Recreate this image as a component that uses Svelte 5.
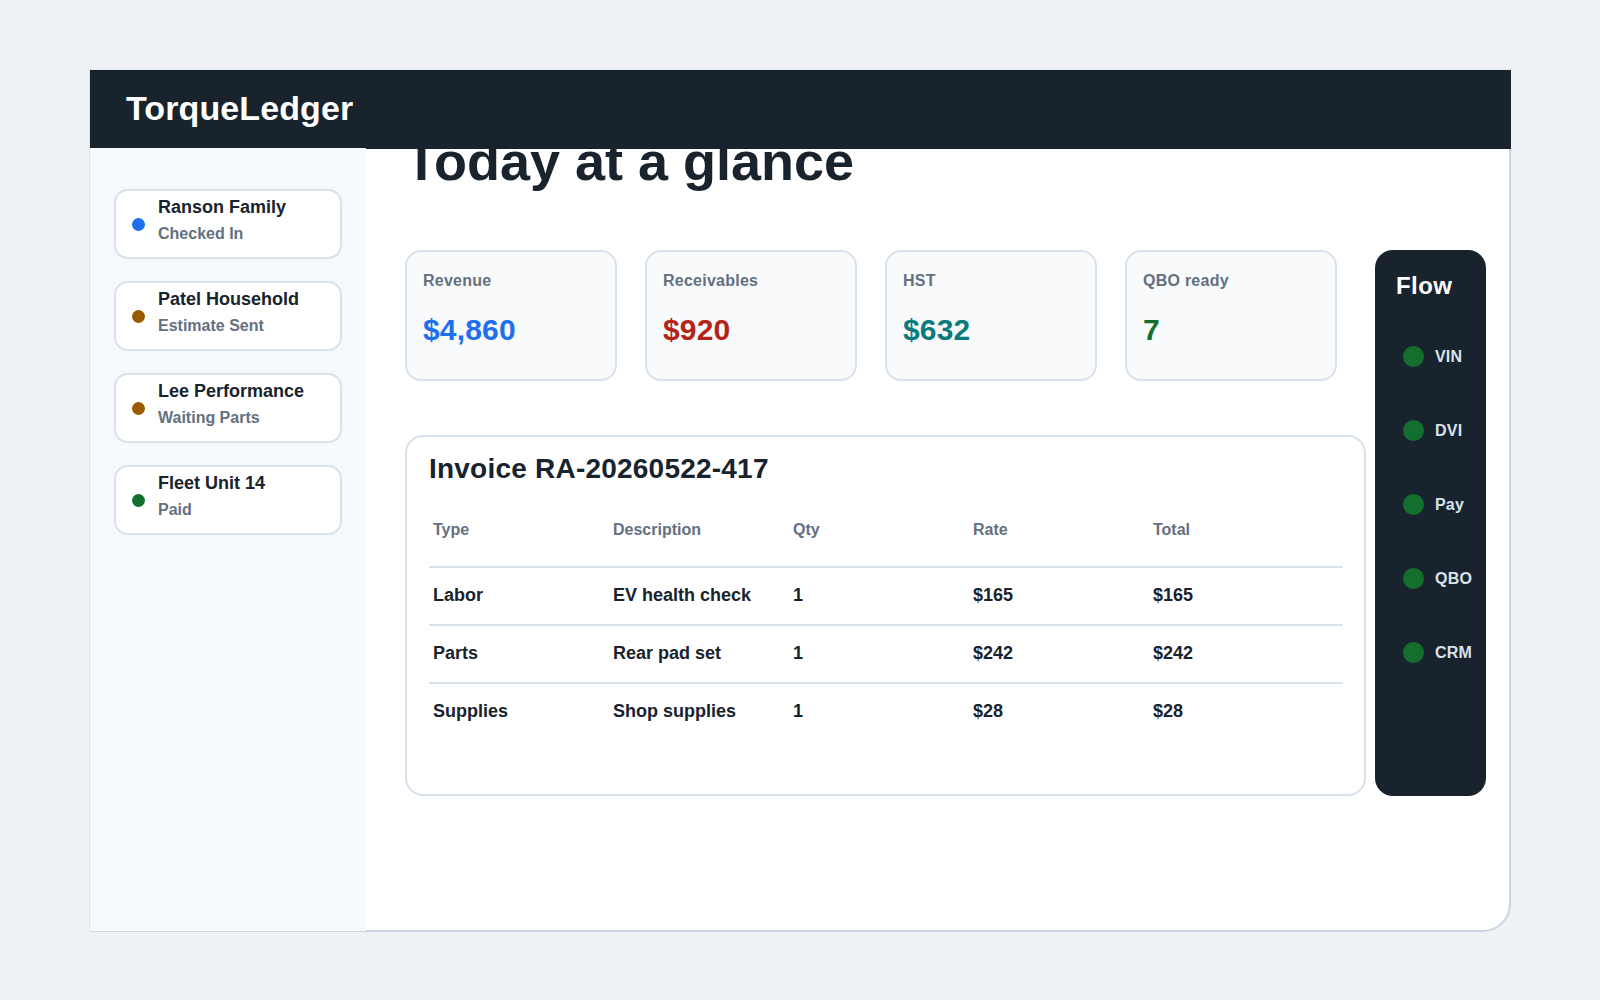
<script lang="ts">
	const jobs = [
		{ name: 'Ranson Family', status: 'Checked In', tone: 'blue' },
		{ name: 'Patel Household', status: 'Estimate Sent', tone: 'amber' },
		{ name: 'Lee Performance', status: 'Waiting Parts', tone: 'amber' },
		{ name: 'Fleet Unit 14', status: 'Paid', tone: 'green' }
	];

	const stats = [
		{ label: 'Revenue', value: '$4,860', tone: 'blue' },
		{ label: 'Receivables', value: '$920', tone: 'red' },
		{ label: 'HST', value: '$632', tone: 'teal' },
		{ label: 'QBO ready', value: '7', tone: 'green' }
	];

	const columns = ['Type', 'Description', 'Qty', 'Rate', 'Total'];

	const lines = [
		['Labor', 'EV health check', '1', '$165', '$165'],
		['Parts', 'Rear pad set', '1', '$242', '$242'],
		['Supplies', 'Shop supplies', '1', '$28', '$28']
	];

	const steps = ['VIN', 'DVI', 'Pay', 'QBO', 'CRM'];
</script>

<div class="frame">
	<header class="topbar">
		<span class="logo">TorqueLedger</span>
	</header>

	<aside class="sidebar">
		{#each jobs as job (job.name)}
			<div class="job">
				<span class="dot {job.tone}"></span>
				<div class="job-text">
					<div class="job-name">{job.name}</div>
					<div class="job-status">{job.status}</div>
				</div>
			</div>
		{/each}
	</aside>

	<main class="main">
		<h1 class="title">Today at a glance</h1>

		<div class="board">
			<section class="stats">
				{#each stats as stat (stat.label)}
					<div class="stat">
						<div class="stat-label">{stat.label}</div>
						<div class="stat-value {stat.tone}">{stat.value}</div>
					</div>
				{/each}
			</section>

			<section class="invoice">
				<h2 class="invoice-title">Invoice RA-20260522-417</h2>
				<div class="row head">
					{#each columns as col (col)}
						<div class="cell">{col}</div>
					{/each}
				</div>
				{#each lines as line (line[0])}
					<div class="row">
						{#each line as value, i (i)}
							<div class="cell">{value}</div>
						{/each}
					</div>
				{/each}
			</section>

			<aside class="flow">
				<h3 class="flow-title">Flow</h3>
				{#each steps as step (step)}
					<div class="step">
						<span class="step-dot"></span>
						<span class="step-label">{step}</span>
					</div>
				{/each}
			</aside>
		</div>
	</main>
</div>

<style>
	:global(body) {
		background: #eef2f5;
		font-family: 'Liberation Sans', Arial, sans-serif;
		color: #18232d;
	}

	.frame {
		box-sizing: border-box;
		width: 1422px;
		height: 863px;
		margin: 69px 0 0 89px;
		display: grid;
		grid-template-columns: 275px 1fr;
		grid-template-rows: 78px 1fr;
		background: #fff;
		border: 2px solid #cbd5e1;
		border-top-color: #e4e9ef;
		border-left-color: #dfe5eb;
		border-radius: 0 0 28px 0;
	}

	.topbar {
		grid-column: 1 / -1;
		position: relative;
		z-index: 1;
		margin: -1px -2px 0 -1px;
		display: flex;
		align-items: center;
		padding: 0 36px 2px;
		background: #18232d;
	}

	.logo {
		font-size: 34px;
		font-weight: 700;
		letter-spacing: 0.1px;
		color: #fff;
	}

	.sidebar {
		position: relative;
		z-index: 2;
		margin: -1px 0 -1px -1px;
		padding: 41px 24px 0;
		display: flex;
		flex-direction: column;
		gap: 22px;
		background: #f6fafd;
	}

	.job {
		box-sizing: border-box;
		height: 70px;
		display: flex;
		align-items: center;
		gap: 13px;
		padding: 0 16px;
		background: #fff;
		border: 2px solid #d9e2ec;
		border-radius: 14px;
	}

	.dot {
		flex: none;
		width: 13px;
		height: 13px;
		border-radius: 50%;
	}

	.dot.blue {
		background: #1d6fec;
	}

	.dot.amber {
		background: #9c5a00;
	}

	.dot.green {
		background: #136f2e;
	}

	.job-text {
		margin-top: -10px;
	}

	.job-name {
		font-size: 18px;
		font-weight: 700;
		line-height: 24px;
	}

	.job-status {
		margin-top: 5px;
		font-size: 16px;
		font-weight: 700;
		line-height: 20px;
		color: #64707f;
	}

	.main {
		padding-left: 39px;
		min-width: 0;
	}

	.title {
		margin: -19px 0 0;
		height: 120px;
		font-size: 54px;
		line-height: 62px;
		font-weight: 700;
	}

	.board {
		width: 1081px;
		display: grid;
		grid-template-columns: 961px 111px;
		grid-template-rows: 131px 361px;
		column-gap: 9px;
		row-gap: 54px;
	}

	.stats {
		display: flex;
		gap: 28px;
	}

	.stat {
		box-sizing: border-box;
		width: 212px;
		padding: 18px 16px;
		background: #f8fafc;
		border: 2px solid #d9e2ec;
		border-radius: 16px;
	}

	.stat-label {
		font-size: 16px;
		font-weight: 700;
		line-height: 22px;
		letter-spacing: 0.25px;
		color: #64707f;
	}

	.stat-value {
		margin-top: 20px;
		font-size: 30px;
		font-weight: 700;
		line-height: 36px;
		letter-spacing: 0.17px;
	}

	.stat-value.blue {
		color: #1d6fec;
	}

	.stat-value.red {
		color: #b42318;
	}

	.stat-value.teal {
		color: #0b7a7d;
	}

	.stat-value.green {
		color: #136f2e;
	}

	.invoice {
		grid-row: 2;
		grid-column: 1;
		box-sizing: border-box;
		padding: 15px 21px 0 22px;
		background: #fff;
		border: 2px solid #d9e2ec;
		border-radius: 18px;
	}

	.invoice-title {
		margin: 0 0 11px;
		font-size: 28px;
		line-height: 34px;
		font-weight: 700;
		letter-spacing: 0.22px;
	}

	.row {
		display: grid;
		grid-template-columns: repeat(5, 180px);
		align-items: center;
		box-sizing: border-box;
		height: 58px;
		padding-bottom: 2px;
		border-bottom: 2px solid #d9e2ec;
		font-size: 18px;
		font-weight: 700;
	}

	.row:last-child {
		padding-bottom: 4px;
		border-bottom: 0;
	}

	.row.head {
		height: 71px;
		align-items: start;
		padding: 22px 0 0;
		font-size: 16px;
		line-height: 22px;
		color: #64707f;
	}

	.cell {
		padding: 0 4px;
	}

	.flow {
		grid-row: 1 / 3;
		grid-column: 2;
		box-sizing: border-box;
		padding: 21px 0 0 21px;
		background: #18232d;
		border-radius: 18px;
		color: #fff;
	}

	.flow-title {
		margin: 0 0 18px;
		font-size: 24px;
		line-height: 30px;
		font-weight: 700;
		letter-spacing: 0.4px;
	}

	.step {
		display: flex;
		align-items: center;
		gap: 11px;
		height: 74px;
		padding-left: 7px;
	}

	.step-dot {
		flex: none;
		width: 21px;
		height: 21px;
		border-radius: 50%;
		background: #136f2e;
	}

	.step-label {
		padding-top: 2px;
		font-size: 16px;
		font-weight: 700;
		letter-spacing: 0.2px;
		color: #d9e2ec;
	}
</style>
